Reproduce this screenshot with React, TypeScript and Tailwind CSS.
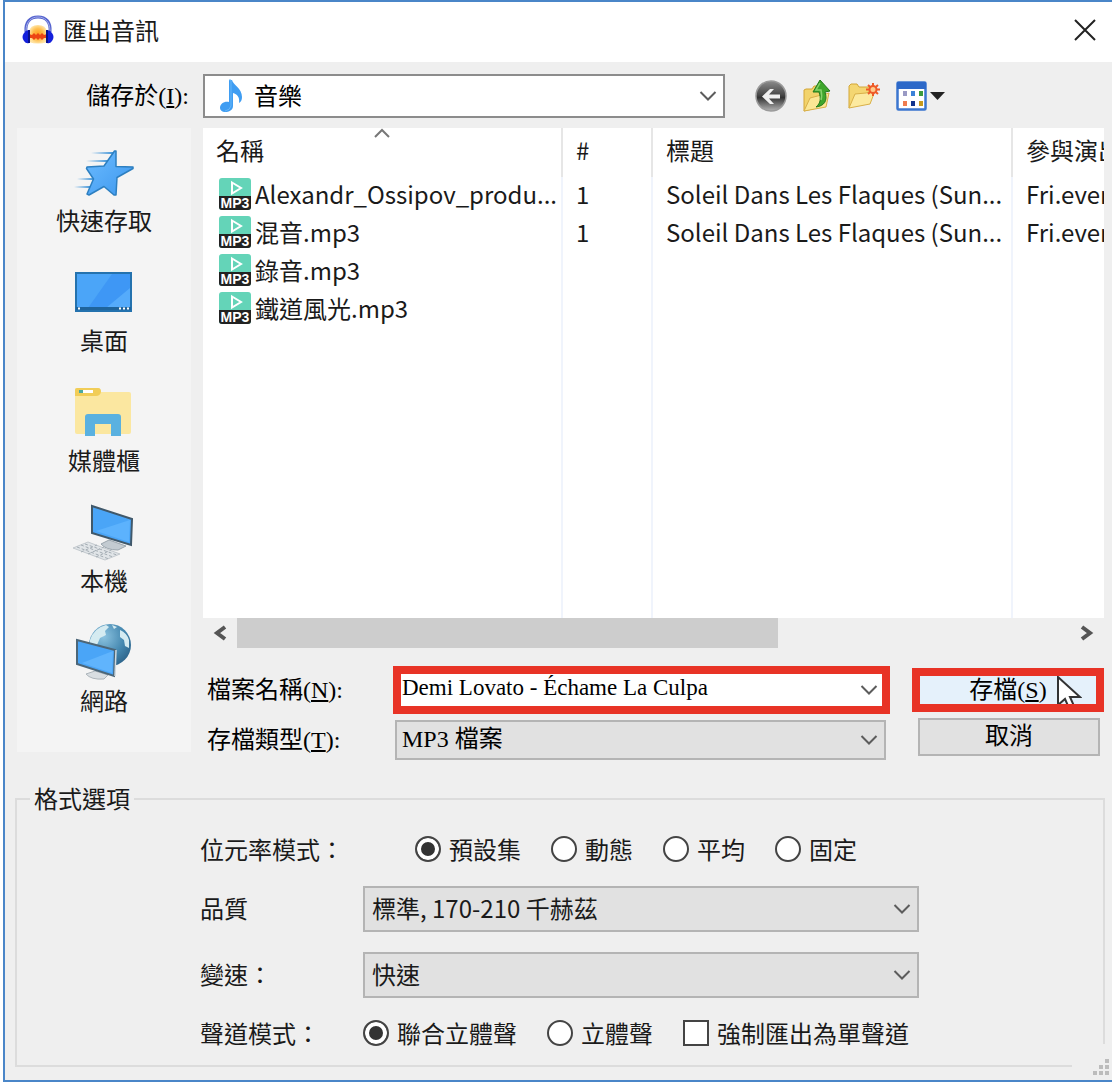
import { useState } from 'react';
import type { ReactNode } from 'react';

const SANS = "font-['Noto_Sans_CJK_TC',sans-serif]";
const SERIF = "font-['Liberation_Serif','Noto_Sans_CJK_TC',serif]";

const files = [
  { name: 'Alexandr_Ossipov_produ...', track: '1', title: 'Soleil Dans Les Flaques (Sun...', artist: 'Fri.events' },
  { name: '混音.mp3', track: '1', title: 'Soleil Dans Les Flaques (Sun...', artist: 'Fri.events' },
  { name: '錄音.mp3', track: '', title: '', artist: '' },
  { name: '鐵道風光.mp3', track: '', title: '', artist: '' },
];

function Chevron() {
  return (
    <svg width="18" height="12" viewBox="0 0 18 12" fill="none" stroke="#5c5c5c" strokeWidth="2">
      <path d="M1.5 2 9 9.5 16.5 2" />
    </svg>
  );
}

function AudacityIcon() {
  return (
    <svg width="34" height="30" viewBox="0 0 34 30">
      <defs>
        <radialGradient id="flame">
          <stop offset="0" stopColor="#ff9a1c" />
          <stop offset=".6" stopColor="#ffbe4d" />
          <stop offset="1" stopColor="#ffe2a0" />
        </radialGradient>
      </defs>
      <path d="M8 27V17q1-7 9-7t9 7v10q-9 3-18 0z" fill="url(#flame)" />
      <path d="m8 19 3 1 2-2 2 2 2-2 2 2 2-2 2 2 3-1v4l-3 0-2 2-2-2-2 2-2-2-2 2-2-2-3 0z" fill="#ec4414" />
      <path d="M5 17C4 7 9 2 17 2s13 5 12 15" fill="none" stroke="#5563cf" strokeWidth="3" />
      <path d="M5 16C5 7 10 2 17 2s12 5 12 14" fill="none" stroke="#a3ade8" strokeWidth="1" />
      <path d="M8 15v13q-3 1-5-2-3-4 0-8 2-3 5-3zM26 15v13q3 1 5-2 3-4 0-8-2-3-5-3z" fill="#1420dc" />
      <path d="M8 15v13M26 15v13" stroke="#0a128c" strokeWidth="2" />
    </svg>
  );
}

function NoteIcon() {
  return (
    <svg width="24" height="34" viewBox="0 0 24 34">
      <path
        d="M10 1h3c1 5 10 8 10 17 0 3-1 5-3 6 1-6-2-9-6-10v13c0 4-4 6-8 6-3 0-5-2-5-4 0-4 4-7 9-6z"
        fill="#3f9df2"
      />
      <path d="M10 1h2v26q-1 4-6 5" fill="none" stroke="#67b6f8" />
    </svg>
  );
}

function BackIcon() {
  return (
    <svg width="32" height="32" viewBox="0 0 32 32">
      <defs>
        <linearGradient id="steel" x2="0" y2="1">
          <stop offset="0" stopColor="#8c8c8c" />
          <stop offset=".45" stopColor="#4a4a4a" />
          <stop offset=".55" stopColor="#343434" />
          <stop offset="1" stopColor="#b4b4b4" />
        </linearGradient>
      </defs>
      <circle cx="16" cy="16" r="15" fill="url(#steel)" stroke="#9a9a9a" strokeWidth="1.5" />
      <path d="m7 16.500 8-7.500h4l-5 5.500h11v4H14l5 5.500h-4z" fill="#f0f0f0" />
    </svg>
  );
}

function UpFolderIcon() {
  return (
    <svg width="30" height="34" viewBox="0 0 30 34">
      <path d="M2 32V11l2-1h6l2-3h8v6l3 1v13z" fill="#f2d36b" stroke="#d3a637" />
      <path d="m2 32 6-13 19-5-3 14z" fill="#fbe795" stroke="#d9b048" />
      <path d="M14 28c5-4 5-9 3-15h-6L18 1l10 11-5 1c3 9-1 14-9 15z" fill="#3ea62c" stroke="#23791c" />
      <path d="m18 4-4 7h5c1 5 1 7 0 10" fill="none" stroke="#86d26a" strokeWidth="1.5" />
    </svg>
  );
}

function NewFolderIcon() {
  return (
    <svg width="34" height="28" viewBox="0 0 34 28">
      <path d="M2 26V4l2-2h6l2 3h11v4z" fill="#f4d672" stroke="#d3a637" />
      <path d="m2 26 6-14 11-1 6-2h3l-5 13z" fill="#fceaa0" stroke="#d9b048" />
      <g stroke="#ee5a28" strokeWidth="2">
        <path d="M26 1v13M19 7.500h14M21 3l10 9M31 3l-10 9" />
      </g>
      <circle cx="26" cy="7.500" r="3.500" fill="#ffc98a" stroke="#ee5a28" strokeWidth="2" />
    </svg>
  );
}

function ViewIcon() {
  return (
    <svg width="50" height="30" viewBox="0 0 50 30">
      <rect x="1.5" y="1.5" width="28" height="27" rx="1" fill="#fff" stroke="#3b76cf" strokeWidth="2.5" />
      <path d="M1 2q0-1 1-1h27q1 0 1 1v6H1z" fill="#2c68c8" />
      <rect x="7" y="10" width="4" height="5" fill="#9a9ac4" />
      <rect x="15" y="10" width="4" height="5" fill="#3c82d8" />
      <rect x="23" y="10" width="4" height="5" fill="#3c9a3c" />
      <rect x="7" y="20" width="4" height="5" fill="#ee7c50" />
      <rect x="15" y="20" width="4" height="5" fill="#12348e" />
      <rect x="23" y="20" width="4" height="5" fill="#c69a1e" />
      <path d="M34 11h15l-7.500 8z" fill="#222" />
    </svg>
  );
}

function Mp3Icon() {
  return (
    <svg className="shrink-0" width="32" height="32" viewBox="0 0 32 32">
      <rect width="32" height="32" rx="3" fill="#64d4b8" />
      <path d="M0 18h32v11q0 3-3 3H3q-3 0-3-3z" fill="#222" />
      <path d="M13 4.500 22 10l-9 5.500z" fill="none" stroke="#fff" strokeWidth="2" />
      <text x="16" y="30" textAnchor="middle" fill="#fff" fontSize="14" fontWeight="bold" fontFamily="Liberation Sans">
        MP3
      </text>
    </svg>
  );
}

function StarIcon() {
  return (
    <svg width="60" height="60" viewBox="0 0 60 60">
      <defs>
        <linearGradient id="speed">
          <stop offset="0" stopColor="#3d93d8" stopOpacity="0" />
          <stop offset="1" stopColor="#3d93d8" />
        </linearGradient>
        <linearGradient id="star" x2="1" y2="1">
          <stop offset="0" stopColor="#6dbcff" />
          <stop offset="1" stopColor="#3c97ee" />
        </linearGradient>
      </defs>
      <g fill="url(#speed)">
        <rect x="17" y="10" width="22" height="2" />
        <rect x="12" y="18" width="22" height="2" />
        <rect x="3" y="36" width="17" height="2" />
        <rect x="0" y="44" width="17" height="2" />
      </g>
      <path
        d="M40.500 9H42v15.500l17 .5v1.500L43 35.500 42 53h-2l-10-8.500L15 53l-2-1 6.500-15L12.500 26.500 13 25l17-1z"
        fill="url(#star)"
        stroke="#2d7fc0"
        strokeWidth="1.500"
        strokeLinejoin="round"
      />
    </svg>
  );
}

function DesktopIcon() {
  return (
    <svg width="60" height="60" viewBox="0 0 60 60">
      <rect x="2" y="11" width="55" height="38" fill="#4ba5f8" stroke="#2472ae" strokeWidth="2" />
      <path d="M38 12h18v34H14z" fill="#3e97f5" />
      <path d="M56 26v20H32z" fill="#55abfb" />
      <path d="M2 46.500h55" stroke="#1f649c" strokeWidth="3" />
      <path d="M4 46.500h2M45 46.500h2M49 46.500h2M53 46.500h2" stroke="#fff" strokeWidth="2" />
    </svg>
  );
}

function LibraryIcon() {
  return (
    <svg width="60" height="60" viewBox="0 0 60 60">
      <path d="M1 8q0-2 2-2h21q3 0 3 4h28q2 0 2 2v38q0 2-2 2H3q-2 0-2-2z" fill="#fbe7a0" />
      <path d="M1 8q0-2 2-2h21q3 0 3 4-1 4-5 4H1z" fill="#f1cd58" />
      <path d="M5 8h4v3H5z" fill="#4aa9a0" />
      <path d="M9 8h10v3H9z" fill="#fff" />
      <path d="M11 54V35q0-3 3-3h30q3 0 3 3v19H37V42H21v12z" fill="#5ab1e0" />
    </svg>
  );
}

function ComputerIcon() {
  return (
    <svg className="overflow-visible" width="60" height="60" viewBox="0 0 60 60">
      <path d="m27 42 8-4 17 6-8 4q-12 0-17-6z" fill="#c3cbd1" stroke="#9aa5ad" />
      <path d="m18 4 40 13-1 26-39-12z" fill="#4aa5f7" stroke="#40586a" strokeWidth="2" />
      <path d="m56 18-1 22-33-11z" fill="#5cb2fd" />
      <path d="m-1 46 15-6 32 12-15 6z" fill="#e1e5e8" stroke="#c3c9ce" />
      <path d="m3 45 32 12M7 43l32 12M11 42l32 11M7 50l16-7M14 52l16-7M22 55l15-7" stroke="#a4adb4" strokeDasharray="3 2" />
    </svg>
  );
}

function NetworkIcon() {
  return (
    <svg width="60" height="60" viewBox="0 0 60 60">
      <defs>
        <radialGradient id="globe" cx=".35" cy=".3" r=".8">
          <stop offset="0" stopColor="#8cc3e0" />
          <stop offset=".6" stopColor="#4588b0" />
          <stop offset="1" stopColor="#2a5f86" />
        </radialGradient>
      </defs>
      <circle cx="36" cy="23" r="21" fill="url(#globe)" />
      <path d="M16 18Q20 6 32 3l3 2-4 4 1 4-6 3-3 7-7-1zM46 8q7 3 9 10v8l-4-2-1-6-4-3zM38 3l5 2-3 2z" fill="#d5ebf1" />
      <path d="m12 52 9-3 13 4-4 4q-13 1-18-5z" fill="#d9dee2" stroke="#adb5bb" />
      <path d="m3 18 38 10-1 26L3 42z" fill="#4aa5f7" stroke="#4c6678" strokeWidth="2" />
      <path d="m39 29-1 22L8 41z" fill="#60b4fd" />
      <path d="m42 28-1 26" stroke="#cfd8de" strokeWidth="1.500" />
    </svg>
  );
}

const places = [
  { label: '快速存取', icon: <StarIcon /> },
  { label: '桌面', icon: <DesktopIcon /> },
  { label: '媒體櫃', icon: <LibraryIcon /> },
  { label: '本機', icon: <ComputerIcon /> },
  { label: '網路', icon: <NetworkIcon /> },
];

function Dropdown({ id, options, className }: { id: string; options: string[]; className: string }) {
  return (
    <div className="relative">
      <select id={id} className={`w-full appearance-none border-2 pr-10 pb-[2px] text-2xl outline-none ${className}`}>
        {options.map((o) => (
          <option key={o}>{o}</option>
        ))}
      </select>
      <span className="pointer-events-none absolute inset-y-0 right-2 flex items-center">
        <Chevron />
      </span>
    </div>
  );
}

function Choice({ type, name, label, checked, onChange }: {
  type: 'radio' | 'checkbox';
  name: string;
  label: string;
  checked: boolean;
  onChange: () => void;
}) {
  return (
    <label className="flex items-center gap-2">
      <input
        type={type}
        name={name}
        checked={checked}
        onChange={onChange}
        className={`size-[26px] appearance-none border-2 border-[#444] bg-white ${
          type === 'radio' ? 'rounded-full' : ''
        } checked:bg-[#333] checked:shadow-[inset_0_0_0_4px_white]`}
      />
      {label}
    </label>
  );
}

function Field({ label, htmlFor, className, children }: {
  label: string;
  htmlFor?: string;
  className: string;
  children: ReactNode;
}) {
  return (
    <div className={`flex h-[46px] items-center ${className}`}>
      {htmlFor ? (
        <label htmlFor={htmlFor} className="w-[163px] pb-[2px]">{label}</label>
      ) : (
        <span className="w-[163px]">{label}</span>
      )}
      <div className="flex-1">{children}</div>
    </div>
  );
}

export default function App() {
  const [fileName, setFileName] = useState('Demi Lovato - Échame La Culpa');
  const [bitrate, setBitrate] = useState('預設集');
  const [channel, setChannel] = useState('聯合立體聲');
  const [mono, setMono] = useState(false);

  const th = 'h-[49px] overflow-hidden border-r-2 border-[#e6e6e6] pt-0 pr-0 pb-[6px] pl-[13px] text-left font-normal whitespace-nowrap last:border-r-0';
  const td = 'h-[38px] overflow-hidden border-r-2 border-[#f0f4fc] pt-0 pr-0 pb-1 pl-[13px] whitespace-nowrap last:border-r-0';

  return (
    <main className={`relative ml-[3px] border-y-2 border-l-2 border-[#4a86c8] bg-[#efefef] text-2xl leading-7 text-[#1a1a1a] ${SANS}`}>
      <header className="flex h-[60px] items-center gap-2 bg-white pr-4 pb-1 pl-4">
        <AudacityIcon />
        <h1 className="flex-1">匯出音訊</h1>
        <button type="button" aria-label="關閉">
          <svg width="22" height="22" viewBox="0 0 22 22" stroke="#222" strokeWidth="2">
            <path d="m1 1 20 20M21 1 1 21" />
          </svg>
        </button>
      </header>

      <div className="pt-3 pr-2 pl-3">
        <div className="flex items-center">
          <label htmlFor="folder" className={`w-[186px] pr-[14px] text-right text-black ${SERIF}`}>
            儲存於(<u>I</u>):
          </label>
          <div className="relative flex-1">
            <Dropdown id="folder" options={['音樂']} className="h-11 border-[#8c8c8c] bg-white pl-[49px] text-black" />
            <span className="pointer-events-none absolute inset-y-0 left-4 flex items-center">
              <NoteIcon />
            </span>
          </div>
          <div className="flex w-[379px] items-center gap-[15px] pl-[30px]">
            <button type="button" aria-label="上一頁"><BackIcon /></button>
            <button type="button" aria-label="往上一層"><UpFolderIcon /></button>
            <button type="button" aria-label="建立新資料夾"><NewFolderIcon /></button>
            <button type="button" aria-label="檢視功能表"><ViewIcon /></button>
          </div>
        </div>

        <div className="mt-[10px] flex gap-3">
          <nav className="h-[624px] w-[174px] shrink-0 bg-[#f4f4f4] pt-[14px]">
            {places.map((p) => (
              <button key={p.label} type="button" className="flex h-[120px] w-full flex-col items-center gap-1">
                {p.icon}
                {p.label}
              </button>
            ))}
          </nav>

          <div className="min-w-0 flex-1">
            <div className="flex h-[490px] bg-white">
              <table className="h-full w-full table-fixed border-separate border-spacing-0">
                <thead>
                  <tr>
                    <th className={`relative w-[360px] ${th}`}>
                      名稱
                      <svg className="absolute top-0 left-1/2 -translate-x-1/2" width="18" height="10" viewBox="0 0 18 10" fill="none" stroke="#777" strokeWidth="2">
                        <path d="m2 9 7-7 7 7" />
                      </svg>
                    </th>
                    <th className={`w-[90px] ${th}`}>#</th>
                    <th className={`w-[360px] ${th}`}>標題</th>
                    <th className={th}>參與演出者</th>
                  </tr>
                </thead>
                <tbody>
                  {files.map((f) => (
                    <tr key={f.name}>
                      <td className={td}>
                        <div className="flex items-center gap-1 pl-[3px]">
                          <Mp3Icon />
                          {f.name}
                        </div>
                      </td>
                      <td className={td}>{f.track}</td>
                      <td className={td}>{f.title}</td>
                      <td className={td}>{f.artist}</td>
                    </tr>
                  ))}
                  <tr className="h-full">
                    <td className={td} />
                    <td className={td} />
                    <td className={td} />
                    <td className={td} />
                  </tr>
                </tbody>
              </table>
            </div>

            <div className="flex h-[30px]">
              <button type="button" aria-label="向左捲動" className="flex w-[34px] items-center justify-center">
                <svg width="14" height="16" viewBox="0 0 14 16" fill="none" stroke="#555" strokeWidth="4">
                  <path d="M12 2 4 8l8 6" />
                </svg>
              </button>
              <div className="flex-1">
                <div className="h-full w-[65%] bg-[#cdcdcd]" />
              </div>
              <button type="button" aria-label="向右捲動" className="flex w-[34px] items-center justify-center">
                <svg width="14" height="16" viewBox="0 0 14 16" fill="none" stroke="#555" strokeWidth="4">
                  <path d="m2 2 8 6-8 6" />
                </svg>
              </button>
            </div>

            <div className={`mt-[18px] flex gap-[22px] text-black ${SERIF}`}>
              <div className="grid flex-1 grid-cols-[190px_1fr] items-center gap-y-[6px]">
                <label htmlFor="filename" className="pl-1">
                  檔案名稱(<u>N</u>):
                </label>
                <div className="flex h-12 items-center border-8 border-[#e83326] bg-white pr-1">
                  <input
                    id="filename"
                    value={fileName}
                    onChange={(e) => setFileName(e.target.value)}
                    className="h-full min-w-0 flex-1 pb-1 pl-[1px] text-[23px] outline-none"
                  />
                  <button type="button" aria-label="最近的檔案名稱">
                    <Chevron />
                  </button>
                </div>
                <label htmlFor="filetype" className="pl-1">
                  存檔類型(<u>T</u>):
                </label>
                <div className="pr-1 pl-[2px]">
                  <Dropdown id="filetype" options={['MP3 檔案']} className="h-10 border-[#b4b4b4] bg-[#e1e1e1] pl-[5px]" />
                </div>
              </div>
              <div className="flex w-48 flex-col gap-[6px] pt-[2px]">
                <button type="button" className="relative h-11 overflow-hidden border-8 border-[#e83326] bg-[#e5f1fb]">
                  存檔(<u>S</u>)
                  <svg className="absolute top-0 right-[14px]" width="26" height="34" viewBox="0 0 26 34" fill="#fff" stroke="#333" strokeWidth="2">
                    <path d="M2 1v28l7-6 4 9 5-2-4-9h10z" />
                  </svg>
                </button>
                <button type="button" className="mr-1 ml-[6px] h-[38px] border-2 border-[#b4b4b4] bg-[#e1e1e1] pb-[2px]">
                  取消
                </button>
              </div>
            </div>
          </div>
        </div>
      </div>

      <fieldset className="mt-6 mr-[7px] mb-[13px] ml-[10px] border-2 border-[#dcdcdc] pb-[9px] pl-[183px]">
        <legend className="-ml-[170px] h-[30px] px-1">格式選項</legend>
        <Field label="位元率模式：" className="mt-3">
          <div className="flex items-center gap-[30px] pl-[52px]" role="radiogroup" aria-label="位元率模式">
            {['預設集', '動態', '平均', '固定'].map((o) => (
              <Choice key={o} type="radio" name="bitrate" label={o} checked={bitrate === o} onChange={() => setBitrate(o)} />
            ))}
          </div>
        </Field>
        <Field label="品質" htmlFor="quality" className="mt-[14px] pr-[184px]">
          <Dropdown id="quality" options={['標準, 170-210 千赫茲']} className="h-[46px] border-[#b4b4b4] bg-[#e1e1e1] pl-[7px]" />
        </Field>
        <Field label="變速：" htmlFor="speed-mode" className="mt-5 pr-[184px]">
          <Dropdown id="speed-mode" options={['快速']} className="h-[46px] border-[#b4b4b4] bg-[#e1e1e1] pl-[7px]" />
        </Field>
        <Field label="聲道模式：" className="mt-3">
          <div className="flex items-center gap-[30px]">
            {['聯合立體聲', '立體聲'].map((o) => (
              <Choice key={o} type="radio" name="channel" label={o} checked={channel === o} onChange={() => setChannel(o)} />
            ))}
            <Choice type="checkbox" name="mono" label="強制匯出為單聲道" checked={mono} onChange={() => setMono(!mono)} />
          </div>
        </Field>
      </fieldset>

      {/* size grip sits over the group box corner */}
      <div className="absolute right-0 bottom-0 flex h-9 w-10 items-end justify-end bg-[#efefef] pr-[2px] pb-1">
        <svg width="18" height="18" viewBox="0 0 18 18" fill="#bcbcbc">
          <path d="M13 1h4v4h-4zM7 7h4v4H7zM13 7h4v4h-4zM1 13h4v4H1zM7 13h4v4H7zM13 13h4v4h-4z" />
        </svg>
      </div>
    </main>
  );
}
